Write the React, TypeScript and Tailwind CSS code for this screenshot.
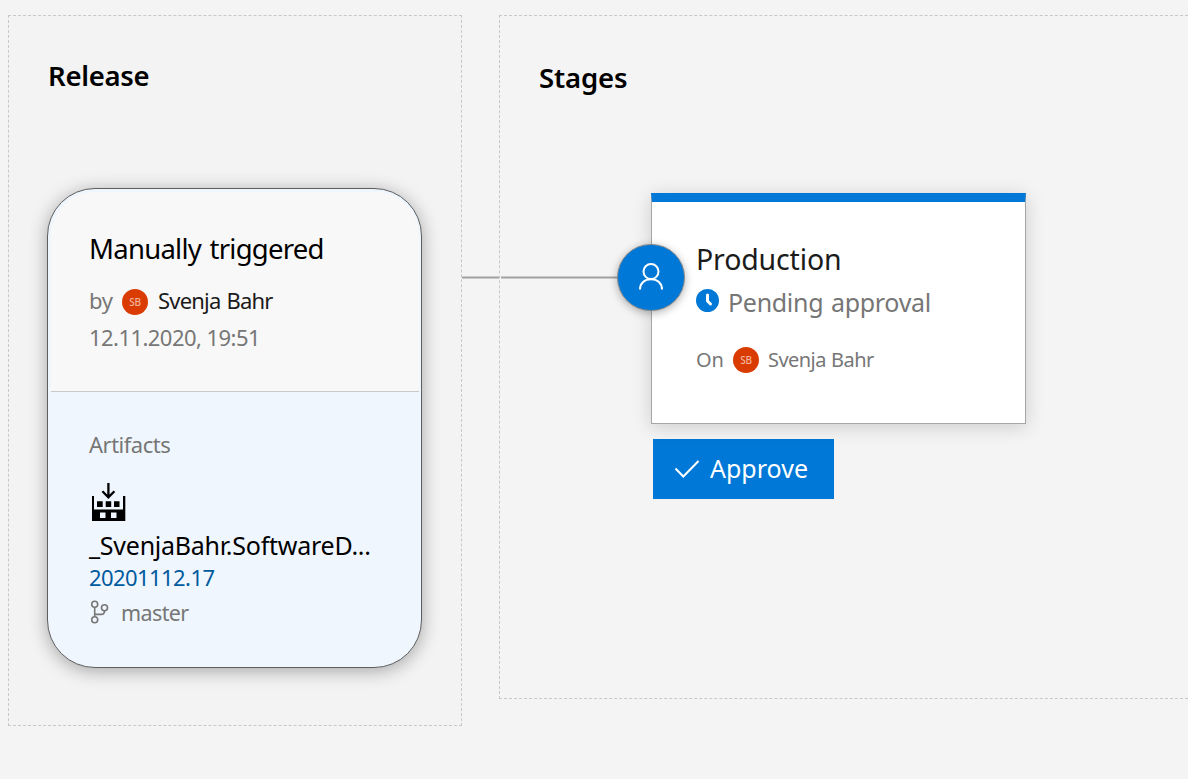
function Avatar() {
  return (
    <span className="flex h-[26px] w-[26px] shrink-0 items-center justify-center rounded-full bg-[#da3b01] text-[10px] font-medium leading-none tracking-[-0.2px] text-[#f2b39c]">
      SB
    </span>
  );
}

function BuildIcon() {
  return (
    <svg className="block h-[40px] w-[38px]" viewBox="0 0 38 40" fill="#000">
      <path d="M3 14h2v13.500h29V14h2.300v25H3zM11 30.500V36h5.500v-5.500zM22 30.500V36h5.500v-5.500z" fillRule="evenodd" />
      <path d="M8 19.300h5.700V25H8zM16.700 19.300h5.500V25h-5.500zM25 19.300h5.500V25H25z" />
      <path d="M19.400 1v14M13.400 9.300l6 6 6-6" fill="none" stroke="#000" strokeWidth="2.300" />
    </svg>
  );
}

function BranchIcon() {
  return (
    <svg className="block h-[24px] w-[20px]" viewBox="0 0 20 24" fill="none" stroke="#767676" strokeWidth="1.600">
      <circle cx="5.700" cy="4.300" r="3" />
      <circle cx="5.700" cy="19.700" r="3" />
      <circle cx="15.500" cy="7.800" r="3" />
      <path d="M5.700 7.300v9.400M15.500 10.800c0 2.200-1 3.600-3 3.600H5.700" />
    </svg>
  );
}

function PersonIcon() {
  return (
    <svg className="block h-[30px] w-[26px]" viewBox="0 0 26 30" fill="none" stroke="#fff" strokeWidth="2">
      <circle cx="13" cy="8.600" r="7.500" />
      <path d="M2 26.500c0-6.300 4.500-10.200 11-10.200s11 3.900 11 10.200" />
    </svg>
  );
}

function ClockIcon() {
  return (
    <svg className="block h-[23px] w-[23px]" viewBox="0 0 23 23" fill="none">
      <circle cx="11.500" cy="11.500" r="11.500" fill="#0078d7" />
      <path d="M11.500 6v6l3 3" stroke="#fff" strokeWidth="3" strokeLinecap="round" strokeLinejoin="round" />
    </svg>
  );
}

function CheckIcon() {
  return (
    <svg className="block h-[20px] w-[26px]" viewBox="0 0 26 20" fill="none" stroke="#fff" strokeWidth="2">
      <path d="M1.500 9.500l7.800 8L24.500 2" />
    </svg>
  );
}

function ReleaseCard() {
  return (
    <div className="h-[480px] w-[375px] rounded-[48px] border border-[#5e5e5e] bg-[#eff6fd] py-[3px] pl-[3px] pr-[2px] shadow-[0_3px_18px_rgba(0,0,0,0.32)]">
      <div className="flex h-[200px] flex-col rounded-t-[44px] border-b border-[#c8c8c8] bg-[#f8f8f8] pl-[38px] pt-[37px]">
        <div className="h-10 text-[27.500px] leading-[40px] tracking-[-0.74px] text-black [word-spacing:2px]">
          Manually triggered
        </div>
        <div className="mt-[15px] flex h-8 items-center text-[22px] leading-[32px]">
          <span className="w-[33px] tracking-[-0.3px] text-[#767676]">by</span>
          <span className="mt-[3px]">
            <Avatar />
          </span>
          <span className="ml-[10px] tracking-[-0.8px] text-[#1b1b1b] [word-spacing:1px]">Svenja Bahr</span>
        </div>
        <div className="mt-[5px] h-8 text-[22px] leading-[32px] tracking-[-0.55px] text-[#767676]">12.11.2020, 19:51</div>
      </div>
      <div className="flex flex-col pl-[38px] pt-9">
        <div className="h-8 text-[22px] leading-[32px] tracking-[-0.5px] text-[#767676]">Artifacts</div>
        <div className="mt-[22px]">
          <BuildIcon />
        </div>
        <div className="mt-[6px] h-[34px] whitespace-nowrap text-[25px] leading-[34px] tracking-[-0.25px] text-black">
          _SvenjaBahr.SoftwareD...
        </div>
        <div className="h-[31px] text-[22px] leading-[31px] tracking-[-0.57px] text-[#005a9e]">20201112.17</div>
        <div className="mt-[3px] flex h-8 items-center text-[21.500px] leading-[32px] text-[#767676]">
          <BranchIcon />
          <span className="ml-3 mt-[2px] tracking-[-0.6px]">master</span>
        </div>
      </div>
    </div>
  );
}

function StageCard() {
  return (
    <div className="relative h-[231px] w-[375px] border border-t-[9px] border-[#a6a6a6] border-t-[#0078d7] bg-white pl-[44px] pt-[37px] shadow-[0_3px_18px_rgba(0,0,0,0.16)]">
      <div className="absolute left-[-35px] top-[42px] flex h-[67px] w-[68px] items-center justify-center rounded-full border border-[#8a8a8a] bg-[#0078d7] shadow-[0_2px_8px_rgba(0,0,0,0.3)]">
        <PersonIcon />
      </div>
      <div className="h-10 text-[28.500px] leading-[40px] tracking-[-0.15px] text-[#1b1b1b]">Production</div>
      <div className="mt-[5px] flex h-9 items-start text-[25px] leading-[36px] text-[#767676]">
        <span className="mt-[5px]">
          <ClockIcon />
        </span>
        <span className="ml-[9px] tracking-[-0.3px] [word-spacing:1.500px]">Pending approval</span>
      </div>
      <div className="mt-[25px] flex h-[30px] items-center text-[20px] leading-[30px] text-[#767676]">
        <span className="w-[37px]">On</span>
        <Avatar />
        <span className="ml-[9px] tracking-[-0.55px] [word-spacing:0.500px]">Svenja Bahr</span>
      </div>
    </div>
  );
}

export default function App() {
  return (
    <div className="flex h-[779px] w-full items-start gap-[37px] overflow-hidden bg-[#f4f4f4] pl-2 pt-[15px] font-['Noto_Sans',sans-serif]">
      <section className="relative h-[711px] w-[454px] shrink-0 border border-dashed border-[#c8c8c8] bg-[#f3f3f3] pl-[38px] pt-10">
        <h2 className="ml-px h-10 text-[27.500px] font-semibold leading-[40px] tracking-[-0.3px] text-black">Release</h2>
        <div className="mt-[92px]">
          <ReleaseCard />
        </div>
        <div className="absolute left-[453px] top-[260px] flex gap-[2px]">
          <span className="h-[3px] w-[37px] border-y border-[#cccccc] bg-[#a0a0a0]" />
          <span className="h-[3px] w-[120px] border-y border-[#cccccc] bg-[#a0a0a0]" />
        </div>
      </section>
      <section className="h-[684px] grow border border-r-0 border-dashed border-[#c8c8c8] pt-[42px]">
        <h2 className="ml-[39px] h-10 text-[27.500px] font-semibold leading-[40px] tracking-[-0.12px] text-black">Stages</h2>
        <div className="ml-[151px] mt-[95px]">
          <StageCard />
        </div>
        <button className="ml-[153px] mt-[15px] flex h-[60px] w-[181px] items-center bg-[#0078d7] pl-[21px] text-[25px] leading-[36px] text-white">
          <CheckIcon />
          <span className="mb-[2px] ml-[10px]">Approve</span>
        </button>
      </section>
    </div>
  );
}
